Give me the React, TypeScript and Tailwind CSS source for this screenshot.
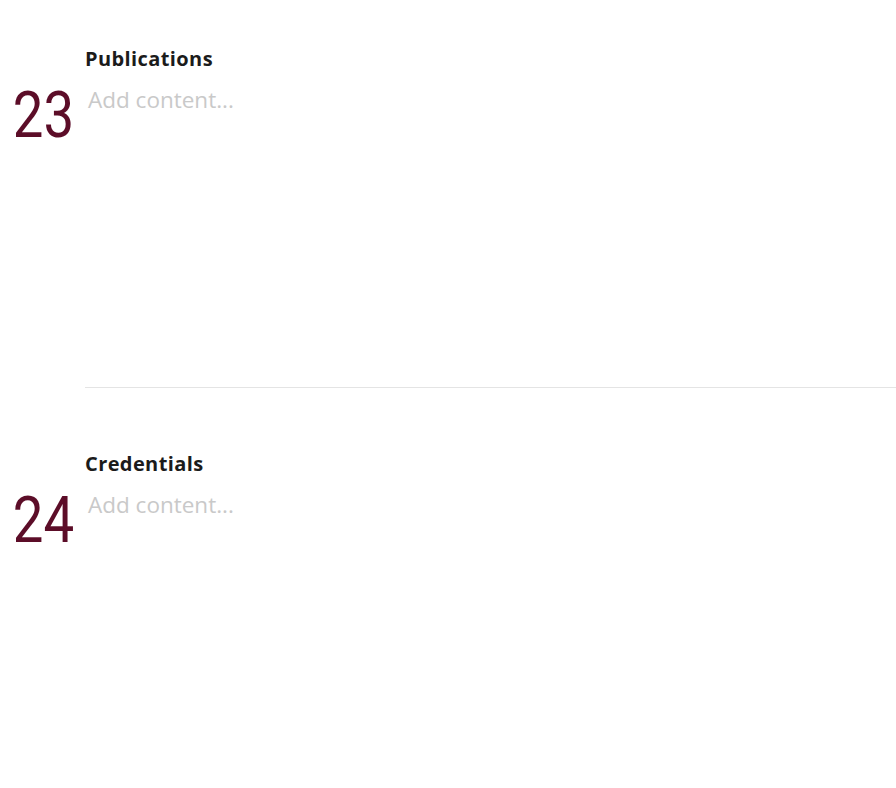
import React from 'react'

interface Section {
  num: number
  title: string
}

const SECTIONS: Section[] = [
  { num: 23, title: 'Publications' },
  { num: 24, title: 'Credentials' },
]

const openSans = { fontFamily: '"Open Sans", sans-serif' }

function SectionBlock({ section, last }: { section: Section; last: boolean }) {
  return (
    <div className={last ? 'h-[400px]' : 'h-[341px] border-b border-[#e4e4e4] ml-[85px]'}>
      <div className={last ? '' : '-ml-[85px]'}>
        <h3 className="pl-[85px] text-[20px] font-bold leading-[24px] tracking-[0.4px] text-[#1b1b1b]" style={openSans}>
          {section.title}
        </h3>
        <div className="flex items-start mt-[14px]">
          <div className="w-[84px] shrink-0 pr-[10px] flex justify-end -mt-[2px]">
            <span
              className="block origin-right scale-x-[0.84] text-[65px] leading-[65px] text-[#5c0d28]"
              style={{ fontFamily: 'Roboto, sans-serif' }}
            >
              {section.num}
            </span>
          </div>
          <p className="pl-[4px] text-[22.5px] leading-[30px] text-[#c9c9c9]" style={openSans}>
            Add content...
          </p>
        </div>
      </div>
    </div>
  )
}

export default function App() {
  return (
    <div className="w-[896px] h-[788px] overflow-hidden bg-white pt-[47px]">
      {SECTIONS.map((s, i) => (
        <React.Fragment key={s.num}>
          <SectionBlock section={s} last={i === SECTIONS.length - 1} />
          {i < SECTIONS.length - 1 && <div className="h-[64px]" />}
        </React.Fragment>
      ))}
    </div>
  )
}
